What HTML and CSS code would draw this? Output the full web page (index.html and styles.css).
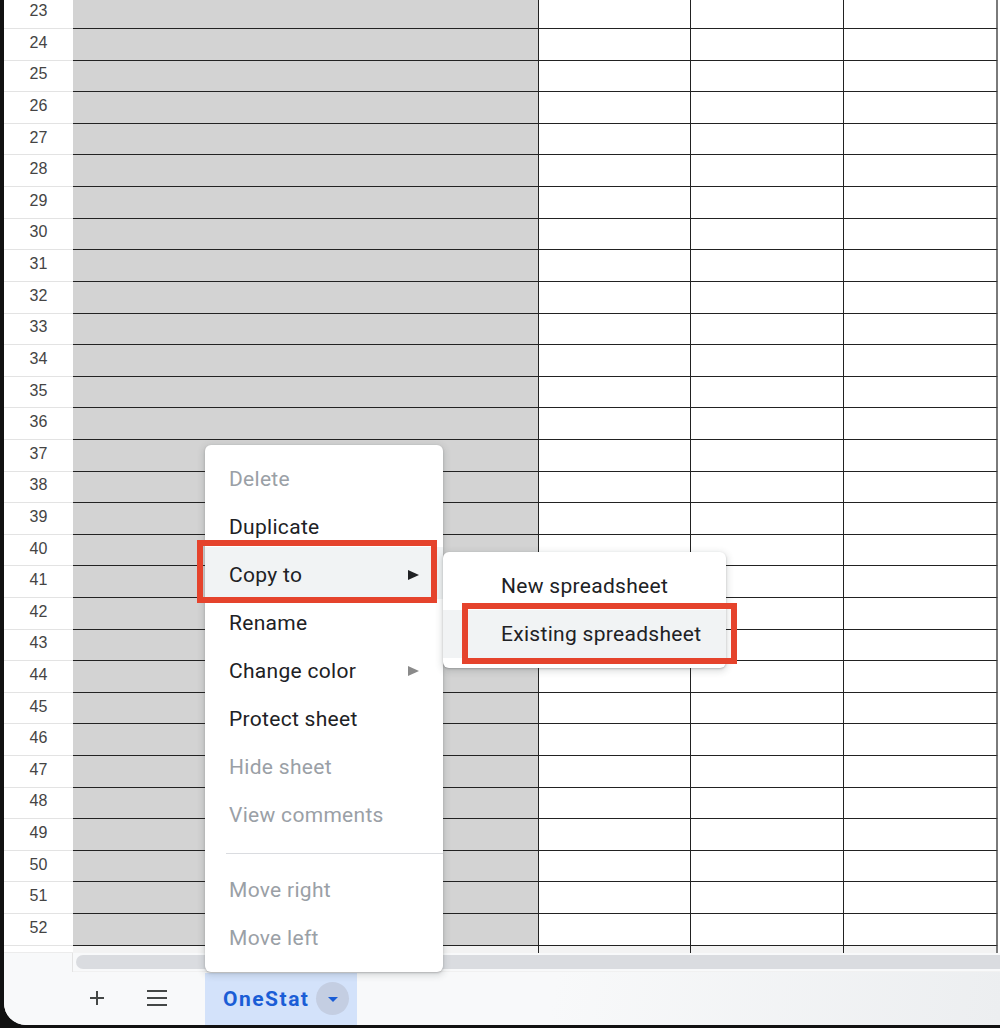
FILE: index.html
```html
<!DOCTYPE html>
<html lang="en">
<head>
<meta charset="utf-8">
<title>Sheet</title>
<link rel="stylesheet" href="styles.css">
</head>
<body>
<div class="window">
  <div class="sheet">
    <div class="row"><div class="rh">23</div><div class="c ca"></div><div class="c cb"></div><div class="c cc"></div><div class="c cd"></div></div>
    <div class="row"><div class="rh">24</div><div class="c ca"></div><div class="c cb"></div><div class="c cc"></div><div class="c cd"></div></div>
    <div class="row"><div class="rh">25</div><div class="c ca"></div><div class="c cb"></div><div class="c cc"></div><div class="c cd"></div></div>
    <div class="row"><div class="rh">26</div><div class="c ca"></div><div class="c cb"></div><div class="c cc"></div><div class="c cd"></div></div>
    <div class="row"><div class="rh">27</div><div class="c ca"></div><div class="c cb"></div><div class="c cc"></div><div class="c cd"></div></div>
    <div class="row"><div class="rh">28</div><div class="c ca"></div><div class="c cb"></div><div class="c cc"></div><div class="c cd"></div></div>
    <div class="row"><div class="rh">29</div><div class="c ca"></div><div class="c cb"></div><div class="c cc"></div><div class="c cd"></div></div>
    <div class="row"><div class="rh">30</div><div class="c ca"></div><div class="c cb"></div><div class="c cc"></div><div class="c cd"></div></div>
    <div class="row"><div class="rh">31</div><div class="c ca"></div><div class="c cb"></div><div class="c cc"></div><div class="c cd"></div></div>
    <div class="row"><div class="rh">32</div><div class="c ca"></div><div class="c cb"></div><div class="c cc"></div><div class="c cd"></div></div>
    <div class="row"><div class="rh">33</div><div class="c ca"></div><div class="c cb"></div><div class="c cc"></div><div class="c cd"></div></div>
    <div class="row"><div class="rh">34</div><div class="c ca"></div><div class="c cb"></div><div class="c cc"></div><div class="c cd"></div></div>
    <div class="row"><div class="rh">35</div><div class="c ca"></div><div class="c cb"></div><div class="c cc"></div><div class="c cd"></div></div>
    <div class="row"><div class="rh">36</div><div class="c ca"></div><div class="c cb"></div><div class="c cc"></div><div class="c cd"></div></div>
    <div class="row"><div class="rh">37</div><div class="c ca"></div><div class="c cb"></div><div class="c cc"></div><div class="c cd"></div></div>
    <div class="row"><div class="rh">38</div><div class="c ca"></div><div class="c cb"></div><div class="c cc"></div><div class="c cd"></div></div>
    <div class="row"><div class="rh">39</div><div class="c ca"></div><div class="c cb"></div><div class="c cc"></div><div class="c cd"></div></div>
    <div class="row"><div class="rh">40</div><div class="c ca"></div><div class="c cb"></div><div class="c cc"></div><div class="c cd"></div></div>
    <div class="row"><div class="rh">41</div><div class="c ca"></div><div class="c cb"></div><div class="c cc"></div><div class="c cd"></div></div>
    <div class="row"><div class="rh">42</div><div class="c ca"></div><div class="c cb"></div><div class="c cc"></div><div class="c cd"></div></div>
    <div class="row"><div class="rh">43</div><div class="c ca"></div><div class="c cb"></div><div class="c cc"></div><div class="c cd"></div></div>
    <div class="row"><div class="rh">44</div><div class="c ca"></div><div class="c cb"></div><div class="c cc"></div><div class="c cd"></div></div>
    <div class="row"><div class="rh">45</div><div class="c ca"></div><div class="c cb"></div><div class="c cc"></div><div class="c cd"></div></div>
    <div class="row"><div class="rh">46</div><div class="c ca"></div><div class="c cb"></div><div class="c cc"></div><div class="c cd"></div></div>
    <div class="row"><div class="rh">47</div><div class="c ca"></div><div class="c cb"></div><div class="c cc"></div><div class="c cd"></div></div>
    <div class="row"><div class="rh">48</div><div class="c ca"></div><div class="c cb"></div><div class="c cc"></div><div class="c cd"></div></div>
    <div class="row"><div class="rh">49</div><div class="c ca"></div><div class="c cb"></div><div class="c cc"></div><div class="c cd"></div></div>
    <div class="row"><div class="rh">50</div><div class="c ca"></div><div class="c cb"></div><div class="c cc"></div><div class="c cd"></div></div>
    <div class="row"><div class="rh">51</div><div class="c ca"></div><div class="c cb"></div><div class="c cc"></div><div class="c cd"></div></div>
    <div class="row"><div class="rh">52</div><div class="c ca"></div><div class="c cb"></div><div class="c cc"></div><div class="c cd"></div></div>
    <div class="row partial"><div class="rh"></div><div class="c ca"></div><div class="c cb"></div><div class="c cc"></div><div class="c cd"></div></div>
  </div>
  <div class="scroll">
    <div class="scroll-corner"></div>
    <div class="scroll-track"><div class="thumb"></div></div>
  </div>
  <div class="tabbar">
    <div class="icon-btn">
      <svg width="18" height="18" viewBox="0 0 18 18"><path d="M9 2v14M2 9h14" stroke="#444746" stroke-width="2" fill="none"/></svg>
    </div>
    <div class="icon-btn">
      <svg width="22" height="18" viewBox="0 0 22 18"><path d="M1 2h20M1 9h20M1 16h20" stroke="#444746" stroke-width="2" fill="none"/></svg>
    </div>
    <div class="tab">
      <span class="tab-name">OneStat</span>
      <span class="tab-drop"><span class="tab-caret"></span></span>
    </div>
  </div>
</div>

<div class="menu">
  <div class="item disabled">Delete</div>
  <div class="item">Duplicate</div>
  <div class="item active">Copy to<span class="arrow"></span></div>
  <div class="item">Rename</div>
  <div class="item">Change color<span class="arrow grey"></span></div>
  <div class="item">Protect sheet</div>
  <div class="item disabled">Hide sheet</div>
  <div class="item disabled">View comments</div>
  <div class="sep"></div>
  <div class="item disabled">Move right</div>
  <div class="item disabled">Move left</div>
</div>

<div class="menu submenu">
  <div class="item">New spreadsheet</div>
  <div class="item active">Existing spreadsheet</div>
</div>

<div class="mark mark-copy"></div>
<div class="mark mark-existing"></div>
</body>
</html>
```

FILE: styles.css
```css
html, body {
  margin: 0;
  padding: 0;
}

body {
  width: 1000px;
  height: 1028px;
  background: #111;
  overflow: hidden;
  position: relative;
  font-family: Roboto, "Liberation Sans", Arial, sans-serif;
}

.window {
  margin-left: 4px;
  width: 996px;
  height: 1025px;
  background: #fff;
  border-bottom-left-radius: 22px;
  overflow: hidden;
  display: flex;
  flex-direction: column;
}

.sheet {
  margin-top: -2.6px;
  display: flex;
  flex-direction: column;
  flex: none;
}

.row {
  display: flex;
  height: 31.62px;
  flex: none;
}

.rh {
  width: 69px;
  flex: none;
  box-sizing: border-box;
  border-bottom: 1px solid #e3e3e3;
  display: flex;
  align-items: center;
  justify-content: center;
  padding-bottom: 3px;
  font-family: "Liberation Sans", Arial, sans-serif;
  font-size: 16px;
  color: #444;
  background: #fff;
}

.c {
  flex: none;
  box-sizing: border-box;
  border-bottom: 1px solid #222;
  border-right: 1px solid #222;
}

.ca {
  width: 466px;
  background: #d3d3d3;
}

.cb {
  width: 152px;
}

.cc {
  width: 153px;
}

.cd {
  width: 154px;
  border-right: 2px solid #7a7a7a;
}

.row.partial {
  height: 7px;
}

.row.partial .rh {
  border-bottom: 1px solid #ececec;
}

.row.partial .c {
  border-bottom: none;
  background: #f3f3f3;
}

.scroll {
  display: flex;
  height: 19px;
  flex: none;
  background: #f8f9fa;
}

.scroll-corner {
  width: 69px;
  box-sizing: border-box;
  border-right: 1px solid #e3e3e3;
}

.scroll-track {
  flex: 1;
  padding: 2px 0 3px 3px;
  border-bottom: 1px solid #f1f1f1;
  box-sizing: border-box;
}

.thumb {
  height: 14px;
  background: #dadce0;
  border-radius: 7px 0 0 7px;
}

.tabbar {
  flex: 1;
  display: flex;
  align-items: center;
  padding-left: 77px;
  background: linear-gradient(100deg, #f8f9fa 55%, #eceef0 100%);
}

.icon-btn {
  width: 32px;
  height: 32px;
  display: flex;
  align-items: center;
  justify-content: center;
  margin-right: 28px;
}

.icon-btn + .icon-btn {
  margin-right: 32px;
}

.tab {
  align-self: stretch;
  margin-top: 1px;
  box-sizing: border-box;
  width: 152px;
  display: flex;
  align-items: center;
  padding: 0 8px 0 18px;
  background: #d3e2fa;
}

.tab-name {
  font-family: Roboto, "Liberation Sans", sans-serif;
  font-weight: 700;
  font-size: 21px;
  letter-spacing: 1.5px;
  color: #1a5dd6;
}

.tab-drop {
  margin-left: auto;
  width: 33px;
  height: 33px;
  border-radius: 50%;
  background: #c4cee2;
  display: flex;
  align-items: center;
  justify-content: center;
}

.tab-caret {
  width: 0;
  height: 0;
  border-left: 5px solid transparent;
  border-right: 5px solid transparent;
  border-top: 5px solid #1a5dd6;
  margin-top: 1px;
}

.menu {
  position: absolute;
  left: 205px;
  top: 445px;
  width: 238px;
  box-sizing: border-box;
  padding: 10px 0;
  background: #fff;
  border-radius: 6px;
  box-shadow: 0 1px 2px rgba(60, 64, 67, 0.3), 0 2px 6px 2px rgba(60, 64, 67, 0.15);
}

.item {
  height: 48px;
  display: flex;
  align-items: center;
  justify-content: space-between;
  padding: 0 24px;
  font-size: 21px;
  letter-spacing: 0.3px;
  color: #202124;
}

.item.disabled {
  color: #9aa0a6;
}

.item.active {
  background: #f1f3f4;
  box-shadow: 0 -4px 0 #f1f3f4;
}

.arrow {
  width: 0;
  height: 0;
  border-left: 11px solid #202124;
  border-top: 5px solid transparent;
  border-bottom: 5px solid transparent;
}

.arrow.grey {
  border-left-color: #8a8a8a;
}

.sep {
  height: 1px;
  margin: 14px 0 12px 21px;
  background: #dadce0;
}

.submenu {
  left: 443px;
  top: 552px;
  width: 283px;
}

.submenu .item {
  padding-left: 58px;
}

.submenu .item.active {
  box-shadow: none;
}

.mark {
  position: absolute;
  box-sizing: border-box;
  border: 6px solid #e5432c;
}

.mark-copy {
  left: 197px;
  top: 540px;
  width: 240px;
  height: 63px;
}

.mark-existing {
  left: 462px;
  top: 603px;
  width: 275px;
  height: 61px;
}
```
